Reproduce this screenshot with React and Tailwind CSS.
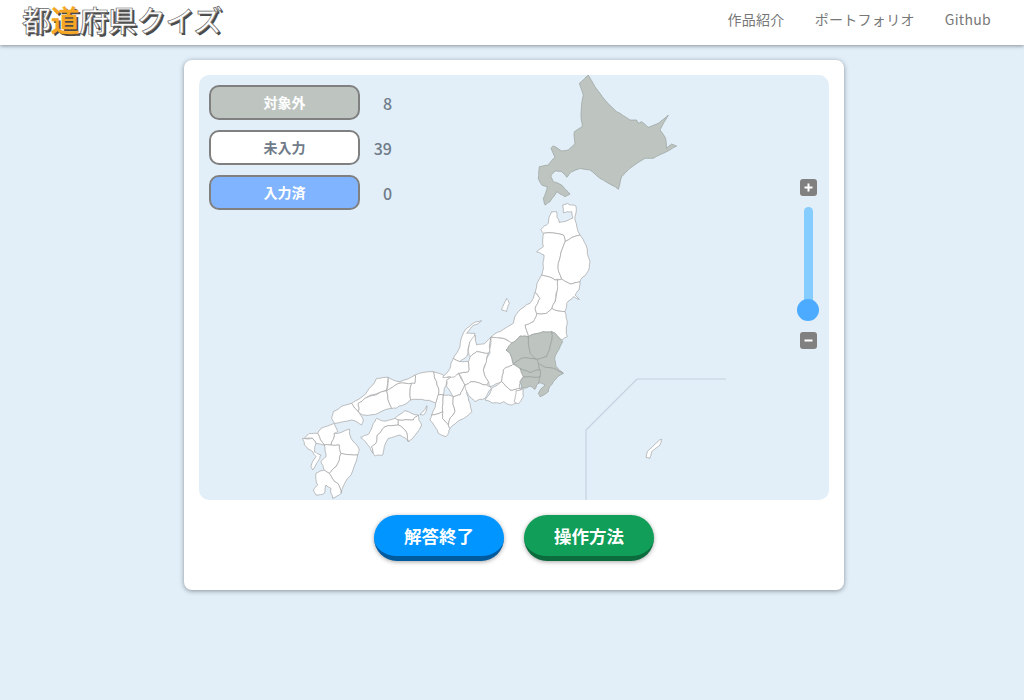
function hash(s) {
  let h = 2166136261;
  for (let i = 0; i < s.length; i++) {
    h ^= s.charCodeAt(i);
    h = Math.imul(h, 16777619);
  }
  return ((h >>> 0) % 1000) / 1000 - 0.5;
}

function splitEdge(a, b, level, amp) {
  if (level === 0) return [];
  const ka = a.join(","), kb = b.join(",");
  const [p, q] = ka < kb ? [a, b] : [b, a];
  const dx = q[0] - p[0], dy = q[1] - p[1];
  const r = hash(ka < kb ? ka + kb : kb + ka) * amp * 2;
  const m = [Math.round(p[0] + dx / 2 - dy * r), Math.round(p[1] + dy / 2 + dx * r)];
  return [...splitEdge(a, m, level - 1, amp), m, ...splitEdge(m, b, level - 1, amp)];
}

function rough(points, amp) {
  const pts = points.split(" ").map((s) => s.split(",").map(Number));
  const out = [];
  pts.forEach((p, i) => {
    out.push(p, ...splitEdge(p, pts[(i + 1) % pts.length], 2, amp));
  });
  return out.map((p) => p.join(",")).join(" ");
}

const tohoku = [
  "215,35 230,35 238,68 250,65 278,55 275,35 250,38 248,15 262,10 288,18 285,60 300,105 255,125 250,105 190,100 183,88 205,70",
  "190,100 250,105 255,125 235,190 245,238 225,240 185,225 190,200 192,165 170,155 190,140",
  "255,125 300,105 318,135 330,185 320,220 300,245 270,252 245,238 235,190",
  "245,238 270,252 300,245 297,270 285,285 298,298 280,290 260,310 255,335 215,325 230,280 233,240",
  "185,225 225,240 233,240 228,280 215,325 200,340 170,340 165,325 180,295 165,278",
  "170,340 200,340 215,325 255,335 262,370 262,410 245,420 215,395 190,395 145,410 135,375 160,365",
  "165,278 180,295 165,325 170,340 160,365 135,375 145,410 120,408 96,429 66,414 33,411 60,395 100,370 115,335 150,310",
  "70,315 80,295 88,310 80,335 65,330",
];
const kanto = [
  "145,410 190,395 215,395 210,440 200,470 170,478 150,460",
  "145,410 150,460 170,478 125,475 100,492 90,460 78,450 96,429 120,408",
  "215,395 245,420 248,425 225,470 228,500 250,520 220,505 175,490 170,478 200,470 210,440",
  "100,492 125,475 170,478 175,490 180,510 150,518 120,505",
  "180,510 175,490 220,505 250,520 220,545 205,575 180,590 175,580 195,555 185,550 170,550 180,530",
  "120,505 150,518 180,510 180,530 150,530 130,530",
  "130,530 150,530 180,530 170,555 165,568 150,558 125,565 120,545",
];
const chubu = [
  "125,2 95,20 80,40 105,40 105,60 90,65 80,110 60,125 40,115 60,80 75,30 100,10",
  "105,45 110,75 130,72 153,51 150,90 145,100 110,95 90,110 85,95 90,65",
  "153,51 186,54 216,69 198,90 210,100 220,132 210,138 190,150 185,185 150,200 145,185 130,150 150,100",
  "90,110 110,95 145,100 130,150 145,185 140,195 95,185 75,195 55,160 85,155 85,125",
  "40,115 60,125 85,125 85,155 55,160 45,170 25,170 8,172 30,145",
  "75,195 95,185 140,195 150,200 155,205 135,235 105,245 95,235 80,215",
  "155,205 185,185 210,210 240,205 245,205 225,240 228,250 215,255 190,245 180,250 135,240",
  "185,185 190,150 210,138 220,132 240,145 250,170 240,185 240,205 210,210",
  "228,212 250,207 250,230 235,252 222,245",
];
const west = [
  "130,215 185,190 205,215 220,240 215,255 185,240 135,250 125,235",
  "185,190 210,175 260,115 295,112 290,150 225,175 205,190 205,215",
  "205,215 205,190 225,175 290,152 305,205 240,225 220,225",
  "290,152 325,130 365,130 362,180 340,195 315,205 305,205",
  "295,112 330,125 375,105 375,130 365,130 325,130 290,152",
  "375,105 430,95 440,125 445,165 440,190 395,178 362,180 365,130 375,130",
  "430,95 480,115 490,130 470,125 460,165 445,165 440,125",
  "470,120 505,100 525,135 510,165 490,170 470,140",
  "440,180 445,165 460,165 458,215 425,225",
  "460,165 490,170 495,215 475,255 457,235 458,215",
  "425,225 458,215 457,235 475,255 480,265 468,290 445,280 420,240",
  "490,170 510,165 525,135 530,135 530,155 540,190 545,215 510,240 480,265 475,255 495,215",
  "390,225 410,197 410,210 400,225",
  "315,235 345,212 385,225 370,240 325,240",
  "325,240 370,240 385,225 395,255 355,305 345,270 325,255",
  "212,292 235,283 250,250 260,235 280,243 315,235 325,240 325,255 285,260 262,285 258,310 245,320 250,340 238,320",
  "250,340 245,320 258,310 262,285 285,260 325,255 345,270 355,305 330,285 295,295 278,345 255,348",
];
const kyushu = [
  "75,40 115,25 125,50 115,55 105,90 85,90 65,55",
  "25,70 40,55 65,55 85,90 60,85 50,70",
  "20,70 50,70 60,85 55,110 75,120 65,140 50,165 45,155 60,125 50,110 25,90",
  "115,55 160,42 165,70 190,105 185,120 135,115 130,90 105,90",
  "85,90 105,90 130,90 135,115 120,155 100,175 85,165 75,140 90,125",
  "135,115 185,120 165,180 135,235 125,205 100,175 120,155",
  "60,175 85,165 100,175 125,205 135,235 110,250 105,220 90,210 85,235 60,240 52,225 65,210",
];
const hokkaido = "205,15 178,40 190,75 183,130 187,170 163,185 165,222 145,240 125,243 100,228 93,235 105,262 85,285 58,290 55,325 65,345 82,350 70,385 75,405 90,395 110,365 135,380 150,372 125,345 100,335 92,318 105,303 125,305 140,322 155,305 180,295 210,300 240,325 285,350 295,358 305,320 330,295 375,265 400,265 440,245 470,228 455,222 440,235 437,205 420,180 445,135 415,160 385,172 365,155 355,160 350,150 330,150 290,125 255,90 225,50";

function Shapes({ list, x, y, gray, amp = 0.09 }) {
  return (
    <g
      transform={`translate(${x} ${y}) scale(${1 / 3})`}
      fill={gray ? "#bec5c1" : "#ffffff"}
      stroke={gray ? "#9aa09c" : "#a3a3a3"}
      strokeWidth="0.7"
      strokeLinejoin="round"
    >
      {list.map((p, i) => (
        <polygon key={i} points={rough(p, amp)} vectorEffect="non-scaling-stroke" />
      ))}
    </g>
  );
}

function JapanMap() {
  return (
    <svg viewBox="199 75 630 425" className="block w-full h-full">
      <path d="M726 379H637L586 430V500" fill="none" stroke="#c3d2de" strokeWidth="1.2" />
      <Shapes list={[hokkaido]} x={520} y={70} gray amp={0.03} />
      <Shapes list={west} x={290} y={340} />
      <Shapes list={kyushu} x={296} y={415} />
      <Shapes list={chubu} x={440} y={320} />
      <Shapes list={tohoku} x={480} y={200} />
      <Shapes list={kanto} x={480} y={200} gray />
      <Shapes list={["275,208 270,225 245,245 240,265 228,262 232,245 250,228 268,210"]} x={570} y={370} amp={0.03} />
    </svg>
  );
}

function Legend({ label, count, box, labelColor }) {
  return (
    <div className="flex items-center h-[35px]">
      <div className={`w-[151px] h-[35px] rounded-[10px] border-2 border-[#808080] flex items-center justify-center text-[14px] font-bold ${box} ${labelColor}`}>
        {label}
      </div>
      <div className="w-[32px] text-right text-[16px] font-medium text-[#6f7b88]">{count}</div>
    </div>
  );
}

function ActionButton({ label, color }) {
  return (
    <button className={`w-[130px] h-[46px] pt-[1px] rounded-[23px] text-white text-[17.5px] font-bold shadow-[0_1px_4px_rgba(0,0,0,0.35)] ${color}`}>
      {label}
    </button>
  );
}

export default function App() {
  return (
    <div className="min-h-[700px] bg-[#e2eff9] font-['Noto_Sans_CJK_JP','Noto_Sans',sans-serif]">
      <header className="h-[45px] bg-white shadow-[0_1px_4px_rgba(0,0,0,0.4)] flex items-center justify-between pl-[22px] pr-[33px] pb-[7px]">
        <div className="text-[29px] leading-[36px] font-medium tracking-[-0.3px] text-white [-webkit-text-stroke:0.7px_#666] [text-shadow:2px_2px_0_#4a4a4a]">
          都<span className="text-[#f5a623] [-webkit-text-stroke:0.4px_#f5a623]">道</span>府県クイズ
        </div>
        <nav className="flex gap-[30px] text-[14px] tracking-[0.3px] text-[#777777]">
          <span>作品紹介</span>
          <span>ポートフォリオ</span>
          <span>Github</span>
        </nav>
      </header>

      <main className="pt-[15px] pl-[4px] flex justify-center">
        <div className="w-[660px] h-[530px] bg-white rounded-[8px] shadow-[0_1px_5px_rgba(0,0,0,0.4)] p-[15px] flex flex-col">
          <div className="relative h-[425px] rounded-[10px] bg-[#e2eff9] overflow-hidden">
            <JapanMap />
            <div className="absolute left-[10px] top-[10px] flex flex-col gap-[10px]">
              <Legend label="対象外" count="8" box="bg-[#bec5c1]" labelColor="text-white" />
              <Legend label="未入力" count="39" box="bg-white" labelColor="text-[#6f7b88]" />
              <Legend label="入力済" count="0" box="bg-[#80b4ff]" labelColor="text-white" />
            </div>
            <div className="absolute left-[598px] top-[104px] w-[22px] flex flex-col items-center">
              <div className="w-[17px] h-[17px] rounded-[3px] bg-[#808080] flex items-center justify-center">
                <svg width="11" height="11" viewBox="0 0 11 11"><path d="M5.5 1.5v8M1.5 5.5h8" stroke="#fff" strokeWidth="2" /></svg>
              </div>
              <div className="relative mt-[11px] w-[9px] h-[103px] rounded-full bg-[#85ccff]">
                <div className="absolute left-[-6.5px] bottom-[-11px] w-[22px] h-[22px] rounded-full bg-[#4dabff]" />
              </div>
              <div className="mt-[22px] w-[17px] h-[17px] rounded-[3px] bg-[#808080] flex items-center justify-center">
                <svg width="11" height="11" viewBox="0 0 11 11"><path d="M1.5 5.5h8" stroke="#fff" strokeWidth="2" /></svg>
              </div>
            </div>
          </div>
          <div className="mt-[15px] flex justify-center gap-[20px]">
            <ActionButton label="解答終了" color="bg-[#0095ff] border-b-[5px] border-[#005a9e]" />
            <ActionButton label="操作方法" color="bg-[#109e58] border-b-[5px] border-[#0b6b3c]" />
          </div>
        </div>
      </main>
    </div>
  );
}
